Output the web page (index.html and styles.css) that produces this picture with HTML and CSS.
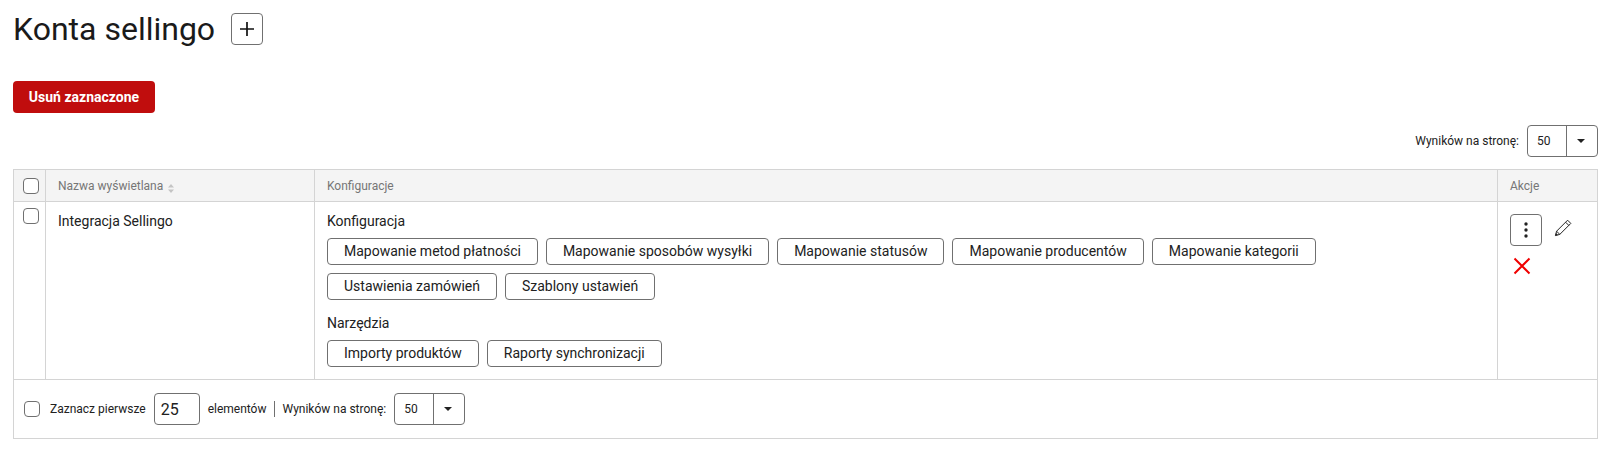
FILE: index.html
```html
<!DOCTYPE html>
<html lang="pl">
<head>
    <meta charset="UTF-8">
    <meta name="viewport" content="width=device-width, initial-scale=1.0">
    <title>Konta sellingo</title>
    <link rel="stylesheet" href="styles.css">
</head>
<body>
    <div class="page-title">
        <h1>Konta sellingo</h1>
        <button class="icon-btn" type="button">
            <svg width="14" height="14" viewBox="0 0 14 14"><path d="M7 0v14M0 7h14" stroke="#111" stroke-width="1.7" fill="none"/></svg>
        </button>
    </div>

    <button class="btn-danger" type="button">Usuń zaznaczone</button>

    <div class="per-page per-page-top">
        <span>Wyników na stronę:</span>
        <div class="select">
            <span class="select-value">50</span>
            <span class="select-arrow"></span>
        </div>
    </div>

    <table class="grid">
        <thead>
            <tr>
                <th class="col-check"><span class="checkbox"></span></th>
                <th class="col-name">Nazwa wyświetlana
                    <svg class="sort" width="6" height="9" viewBox="0 0 6 9"><path d="M3 0l3 3.6H0zM3 9L0 5.4h6z" fill="#c4c4c4"/></svg>
                </th>
                <th>Konfiguracje</th>
                <th class="col-actions">Akcje</th>
            </tr>
        </thead>
        <tbody>
            <tr>
                <td class="col-check"><span class="checkbox"></span></td>
                <td class="cell-name">Integracja Sellingo</td>
                <td class="cell-config">
                    <div class="group-title">Konfiguracja</div>
                    <div class="chips">
                        <a class="chip">Mapowanie metod płatności</a>
                        <a class="chip">Mapowanie sposobów wysyłki</a>
                        <a class="chip">Mapowanie statusów</a>
                        <a class="chip">Mapowanie producentów</a>
                        <a class="chip">Mapowanie kategorii</a>
                        <a class="chip">Ustawienia zamówień</a>
                        <a class="chip">Szablony ustawień</a>
                    </div>
                    <div class="group-title">Narzędzia</div>
                    <div class="chips">
                        <a class="chip">Importy produktów</a>
                        <a class="chip">Raporty synchronizacji</a>
                    </div>
                </td>
                <td class="cell-actions">
                    <div class="actions">
                        <button class="icon-btn" type="button">
                            <svg width="4" height="16" viewBox="0 0 4 16"><circle cx="2" cy="2" r="1.7" fill="#222"/><circle cx="2" cy="8" r="1.7" fill="#222"/><circle cx="2" cy="14" r="1.7" fill="#222"/></svg>
                        </button>
                        <svg class="pencil" width="18" height="18" viewBox="0 0 18 18"><path d="M13.6 1.2l3.2 3.2L5.8 15.400l-4.400 1.200 1.200-4.400zM11.600 3.200l3.200 3.200M2.600 12.200l3.200 3.200" fill="none" stroke="#222" stroke-width="1"/><path d="M1.400 16.600l.6-2.600 2 2z" fill="#222"/></svg>
                        <svg class="remove" width="18" height="18" viewBox="0 0 18 18"><path d="M1.500 1.500l15 15M16.500 1.500l-15 15" stroke="#f00000" stroke-width="2" fill="none"/></svg>
                    </div>
                </td>
            </tr>
        </tbody>
        <tfoot>
            <tr>
                <td colspan="4">
                    <div class="grid-footer">
                        <span class="checkbox"></span>
                        <span class="select-first">Zaznacz pierwsze</span>
                        <input class="count" type="text" value="25">
                        <span class="elements">elementów</span>
                        <div class="per-page">
                            <span>Wyników na stronę:</span>
                            <div class="select">
                                <span class="select-value">50</span>
                                <span class="select-arrow"></span>
                            </div>
                        </div>
                    </div>
                </td>
            </tr>
        </tfoot>
    </table>
</body>
</html>
```

FILE: styles.css
```css
* {
    box-sizing: border-box;
}
body {
    margin: 0;
    padding: 13px;
    font-family: Roboto, "Liberation Sans", sans-serif;
    font-size: 14px;
    color: #212121;
    background: #fff;
}
.page-title {
    display: flex;
    align-items: center;
    gap: 16px;
    height: 32px;
    margin-bottom: 36px;
}
.page-title h1 {
    margin: 0;
    font-size: 32px;
    font-weight: 400;
    line-height: 36px;
    color: #1a1a1a;
}
.icon-btn {
    display: flex;
    align-items: center;
    justify-content: center;
    width: 32px;
    height: 32px;
    padding: 0;
    background: #fff;
    border: 1px solid #707070;
    border-radius: 4px;
}
.btn-danger {
    display: block;
    width: 142px;
    height: 32px;
    padding: 0;
    border: 0;
    border-radius: 4px;
    background: #c00d0d;
    color: #fff;
    font-family: inherit;
    font-size: 14px;
    font-weight: 700;
}
.per-page {
    display: flex;
    align-items: center;
    gap: 8px;
    font-size: 12px;
}
.per-page-top {
    justify-content: flex-end;
    margin: 12px 0;
}
.select {
    display: flex;
    width: 71px;
    height: 32px;
    border: 1px solid #707070;
    border-radius: 4px;
}
.select-value {
    width: 39px;
    padding-left: 9px;
    line-height: 30px;
    border-right: 1px solid #707070;
}
.select-arrow {
    flex: 1;
    position: relative;
}
.select-arrow:after {
    content: "";
    position: absolute;
    left: 10px;
    top: 13px;
    border-top: 4px solid #222;
    border-left: 4px solid transparent;
    border-right: 4px solid transparent;
}
.grid {
    width: 100%;
    border-collapse: collapse;
    table-layout: fixed;
}
.grid th, .grid td {
    border: 1px solid #d4d4d4;
    padding: 0;
    text-align: left;
    vertical-align: top;
}
.grid th {
    height: 32px;
    padding: 0 12px;
    vertical-align: middle;
    background: #f4f4f4;
    font-size: 12px;
    font-weight: 400;
    color: #767676;
}
.grid th.col-check, .grid td.col-check {
    width: 32px;
    padding: 0 0 0 9px;
}
.grid th.col-name {
    width: 269px;
}
.grid th.col-actions {
    width: 100px;
}
.sort {
    margin-left: 2px;
    vertical-align: -3px;
}
.checkbox {
    display: block;
    width: 16px;
    height: 16px;
    border: 1px solid #707070;
    border-radius: 4px;
    background: #fff;
}
.grid td.col-check .checkbox {
    margin-top: 6px;
}
.cell-name {
    padding: 10px 12px 0 !important;
    font-size: 14px;
    line-height: 18px;
}
.cell-config {
    padding: 10px 12px 12px !important;
}
.group-title {
    font-size: 14px;
    line-height: 18px;
    margin-bottom: 8px;
}
.chips {
    display: flex;
    flex-wrap: wrap;
    gap: 8px;
    margin-bottom: 14px;
}
.chips:last-child {
    margin-bottom: 0;
}
.chip {
    height: 27px;
    padding: 0 16px;
    border: 1px solid #707070;
    border-radius: 4px;
    font-size: 14px;
    line-height: 25px;
}
.cell-actions {
    padding: 12px !important;
}
.actions {
    display: flex;
    flex-wrap: wrap;
    gap: 11px 12px;
    align-items: flex-start;
}
.pencil {
    margin-top: 5px;
}
.remove {
    display: block;
    margin-left: 3px;
}
.grid-footer {
    display: flex;
    align-items: center;
    height: 58px;
    padding-left: 10px;
    font-size: 12px;
}
.select-first {
    margin-left: 10px;
}
.count {
    width: 46px;
    height: 32px;
    margin: 0 8px;
    padding: 0 0 0 6px;
    border: 1px solid #707070;
    border-radius: 4px;
    font-family: inherit;
    font-size: 16px;
    color: #212121;
}
.elements {
    padding-right: 8px;
    border-right: 1px solid #707070;
    margin-right: 7px;
    line-height: 16px;
}
```
